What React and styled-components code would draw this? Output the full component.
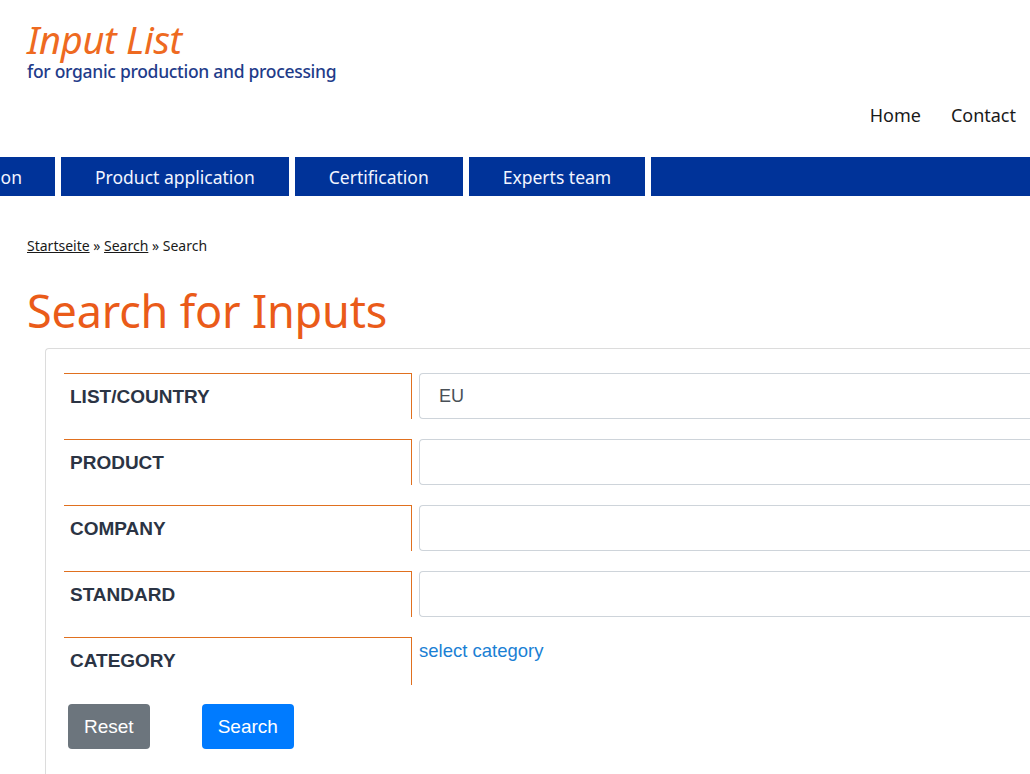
import styled, { createGlobalStyle } from "styled-components";

const GlobalStyle = createGlobalStyle`
	html, body {
		margin: 0;
		padding: 0;
		background: #fff;
		overflow: hidden;
	}
	body {
		font-family: "Noto Sans", "Open Sans", sans-serif;
		width: 1030px;
	}
`;

const Page = styled.div`
	width: 1030px;
	height: 774px;
	overflow: hidden;
`;

const Header = styled.header`
	display: flex;
	justify-content: space-between;
	padding: 17px 14px 0 27px;
	height: 137px;
	box-sizing: border-box;
`;

const Logo = styled.div`
	display: flex;
	flex-direction: column;
`;

const LogoTitle = styled.span`
	font-family: "Noto Sans", sans-serif;
	font-style: italic;
	font-size: 38px;
	line-height: 44px;
	color: #ee6a21;
	letter-spacing: -0.3px;
`;

const LogoSub = styled.span`
	font-family: "Noto Sans", sans-serif;
	font-size: 17.5px;
	font-weight: 500;
	line-height: 20px;
	color: #1f3c8a;
	letter-spacing: -0.3px;
`;

const TopLinks = styled.nav`
	display: flex;
	gap: 30px;
	align-self: flex-start;
	margin-top: 86px;
`;

const TopLink = styled.a`
	font-size: 18px;
	color: #1a1a1a;
	text-decoration: none;
`;

const NavBar = styled.nav`
	display: flex;
	gap: 6px;
	height: 39px;
	margin-top: 20px;
`;

const NavItem = styled.a`
	display: flex;
	align-items: center;
	justify-content: ${(p) => (p.$clip ? "flex-end" : "center")};
	flex: ${(p) => (p.$grow ? "1" : "none")};
	width: ${(p) => (p.$width ? p.$width + "px" : "auto")};
	overflow: hidden;
	white-space: nowrap;
	background: #003399;
	color: #f2f5ff;
	font-size: 17.5px;
	padding: ${(p) => (p.$clip ? "0 33px 0 0" : "0 34px")};
	box-sizing: border-box;
	text-decoration: none;
`;

const Main = styled.main`
	padding: 40px 0 0 27px;
`;

const Breadcrumb = styled.div`
	font-size: 14px;
	color: #1a1a1a;
	line-height: 20px;

	a {
		color: #1a1a1a;
		text-decoration: underline;
	}
`;

const Title = styled.h1`
	margin: 25px 0 7px 0;
	font-weight: 400;
	font-size: 45px;
	line-height: 60px;
	color: #ea5b19;
	letter-spacing: -0.2px;
`;

const Card = styled.section`
	margin: 0 0 0 18px;
	border: 1px solid #dcdcdc;
	border-right: none;
	border-radius: 4px 0 0 0;
	padding: 24px 0 30px 18px;
	height: 500px;
	box-sizing: border-box;
	display: flex;
	flex-direction: column;
	gap: 20px;
`;

const Row = styled.div`
	display: flex;
	gap: 7px;
`;

const Label = styled.div`
	width: 348px;
	height: ${(p) => (p.$tall ? "48px" : "46px")};
	box-sizing: border-box;
	border-top: 1px solid #e0701f;
	border-right: 1px solid #e0701f;
	padding: 11px 0 0 6px;
	font-family: "Liberation Sans", Arial, sans-serif;
	font-weight: 700;
	font-size: 19px;
	line-height: 24px;
	color: #2b3444;
`;

const Input = styled.input`
	flex: 1;
	height: 46px;
	box-sizing: border-box;
	border: 1px solid #ced4da;
	border-right: none;
	border-radius: 4px 0 0 4px;
	padding: 0 19px;
	font-family: "Liberation Sans", Arial, sans-serif;
	font-size: 18px;
	color: #495057;
	outline: none;
`;

const CategoryLink = styled.a`
	font-family: "Liberation Sans", Arial, sans-serif;
	font-size: 18.5px;
	color: #1a7fd4;
	text-decoration: none;
	margin-top: 3px;
`;

const Buttons = styled.div`
	display: flex;
	gap: 52px;
	padding-left: 4px;
	margin-top: -1px;
`;

const Button = styled.button`
	height: 45px;
	padding: 0 16px;
	border: none;
	border-radius: 4px;
	font-family: "Liberation Sans", Arial, sans-serif;
	font-size: 19px;
	color: #fff;
	background: ${(p) => (p.$variant === "primary" ? "#007bff" : "#6c757d")};
`;

const fields = [
	{ label: "LIST/COUNTRY", value: "EU" },
	{ label: "PRODUCT", value: "" },
	{ label: "COMPANY", value: "" },
	{ label: "STANDARD", value: "" },
];

export default function App() {
	return (
		<>
			<GlobalStyle />
			<Page>
				<Header>
					<Logo>
						<LogoTitle>Input List</LogoTitle>
						<LogoSub>for organic production and processing</LogoSub>
					</Logo>
					<TopLinks>
						<TopLink>Home</TopLink>
						<TopLink>Contact</TopLink>
					</TopLinks>
				</Header>
				<NavBar>
					<NavItem $clip $width={55}>
						Information
					</NavItem>
					<NavItem>Product application</NavItem>
					<NavItem>Certification</NavItem>
					<NavItem>Experts team</NavItem>
					<NavItem $grow />
				</NavBar>
				<Main>
					<Breadcrumb>
						<a>Startseite</a> » <a>Search</a> » Search
					</Breadcrumb>
					<Title>Search for Inputs</Title>
					<Card>
						{fields.map((f) => (
							<Row key={f.label}>
								<Label>{f.label}</Label>
								<Input defaultValue={f.value} />
							</Row>
						))}
						<Row>
							<Label $tall>CATEGORY</Label>
							<CategoryLink>select category</CategoryLink>
						</Row>
						<Buttons>
							<Button>Reset</Button>
							<Button $variant="primary">Search</Button>
						</Buttons>
					</Card>
				</Main>
			</Page>
		</>
	);
}
